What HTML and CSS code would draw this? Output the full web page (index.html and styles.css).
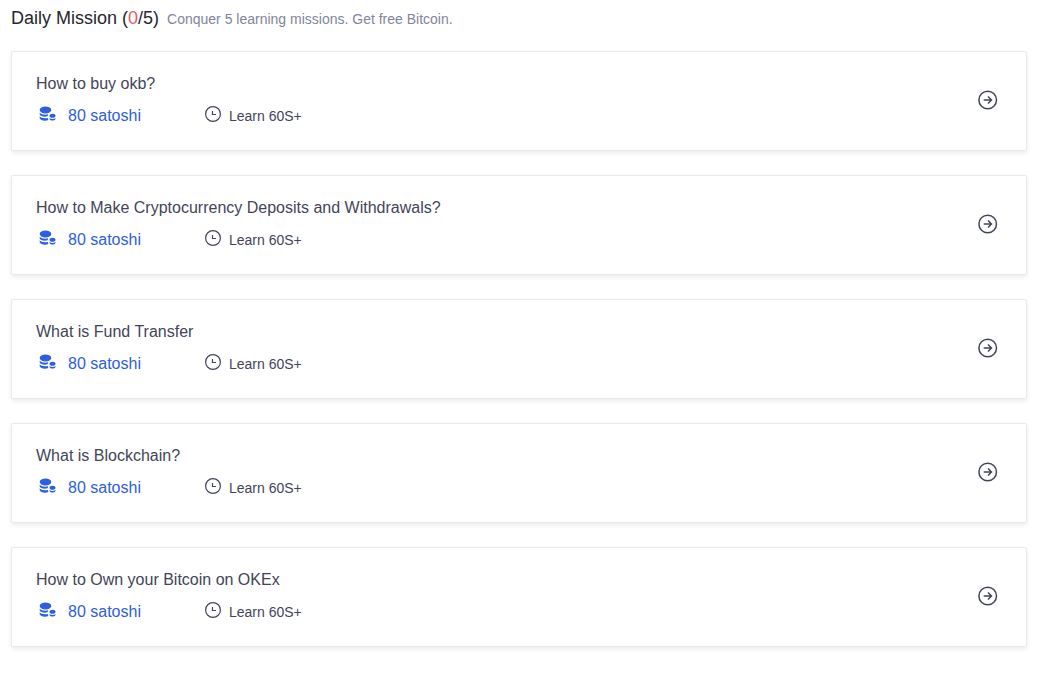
FILE: index.html
```html
<!DOCTYPE html>
<html lang="en">
<head>
    <meta charset="UTF-8">
    <title>Daily Mission</title>
    <link rel="stylesheet" href="styles.css">
</head>
<body>
    <!-- shared icons -->
    <svg class="sprite" aria-hidden="true">
        <symbol id="icon-coins" viewBox="0 0 18 16">
            <ellipse cx="7.500" cy="4" rx="5.800" ry="3.400"/>
            <path d="M1.700 6.800C3.500 8.800 7 9.200 10.200 8.300L9.600 10.300C6.500 11.300 2.500 10.600 1.700 8.600z"/>
            <path d="M1.700 10.300C3.500 12.300 6.500 12.600 9.800 12L10.400 14C7.500 15.400 2.500 14.800 1.700 12.300z"/>
            <ellipse cx="14.500" cy="9.700" rx="3" ry="2"/>
            <path d="M11.500 12C13 13.200 16 13.200 17.500 12V13C16.500 15 12.500 15 11.500 13z"/>
        </symbol>
        <symbol id="icon-clock" viewBox="0 0 16 16">
            <circle cx="8" cy="8" r="7.4"/>
            <path d="M7.500 5V8.500H11"/>
        </symbol>
        <symbol id="icon-arrow" viewBox="0 0 20 20">
            <circle cx="9.700" cy="10" r="8.800"/>
            <path d="M5.700 10H13.400M10 6.500L13.500 10L10 13.500"/>
        </symbol>
    </svg>

    <main class="mission">
        <header class="mission-header">
            <h1 class="mission-title">Daily Mission (<span class="done">0</span>/5)</h1>
            <p class="mission-desc">Conquer 5 learning missions. Get free Bitcoin.</p>
        </header>

        <ul class="mission-list">
            <li>
                <a class="card" href="#">
                    <div class="card-body">
                        <h2 class="card-title">How to buy okb?</h2>
                        <div class="card-meta">
                            <span class="reward"><svg class="coins"><use href="#icon-coins"/></svg>80 satoshi</span>
                            <span class="duration"><svg class="clock"><use href="#icon-clock"/></svg>Learn 60S+</span>
                        </div>
                    </div>
                    <svg class="arrow"><use href="#icon-arrow"/></svg>
                </a>
            </li>
            <li>
                <a class="card" href="#">
                    <div class="card-body">
                        <h2 class="card-title">How to Make Cryptocurrency Deposits and Withdrawals?</h2>
                        <div class="card-meta">
                            <span class="reward"><svg class="coins"><use href="#icon-coins"/></svg>80 satoshi</span>
                            <span class="duration"><svg class="clock"><use href="#icon-clock"/></svg>Learn 60S+</span>
                        </div>
                    </div>
                    <svg class="arrow"><use href="#icon-arrow"/></svg>
                </a>
            </li>
            <li>
                <a class="card" href="#">
                    <div class="card-body">
                        <h2 class="card-title">What is Fund Transfer</h2>
                        <div class="card-meta">
                            <span class="reward"><svg class="coins"><use href="#icon-coins"/></svg>80 satoshi</span>
                            <span class="duration"><svg class="clock"><use href="#icon-clock"/></svg>Learn 60S+</span>
                        </div>
                    </div>
                    <svg class="arrow"><use href="#icon-arrow"/></svg>
                </a>
            </li>
            <li>
                <a class="card" href="#">
                    <div class="card-body">
                        <h2 class="card-title">What is Blockchain?</h2>
                        <div class="card-meta">
                            <span class="reward"><svg class="coins"><use href="#icon-coins"/></svg>80 satoshi</span>
                            <span class="duration"><svg class="clock"><use href="#icon-clock"/></svg>Learn 60S+</span>
                        </div>
                    </div>
                    <svg class="arrow"><use href="#icon-arrow"/></svg>
                </a>
            </li>
            <li>
                <a class="card" href="#">
                    <div class="card-body">
                        <h2 class="card-title">How to Own your Bitcoin on OKEx</h2>
                        <div class="card-meta">
                            <span class="reward"><svg class="coins"><use href="#icon-coins"/></svg>80 satoshi</span>
                            <span class="duration"><svg class="clock"><use href="#icon-clock"/></svg>Learn 60S+</span>
                        </div>
                    </div>
                    <svg class="arrow"><use href="#icon-arrow"/></svg>
                </a>
            </li>
        </ul>
    </main>
</body>
</html>
```
FILE: styles.css
```css
* {
    box-sizing: border-box;
}

body {
    margin: 0;
    font-family: "Liberation Sans", Arial, sans-serif;
    color: #42455a;
    background: #fff;
}

.sprite {
    display: none;
}

.mission {
    padding: 6px 22px 24px 11px;
}

.mission-header {
    display: flex;
    align-items: baseline;
    gap: 8px;
    margin-bottom: 21px;
}

.mission-title {
    margin: 0;
    font-size: 18px;
    font-weight: normal;
    line-height: 24px;
    color: #25262e;
}

.done {
    color: #e35e5e;
}

.mission-desc {
    margin: 0;
    font-size: 14px;
    line-height: 20px;
    color: #81859c;
}

.mission-list {
    display: flex;
    flex-direction: column;
    gap: 24px;
    margin: 0;
    padding: 0;
    list-style: none;
}

.card {
    display: flex;
    align-items: center;
    justify-content: space-between;
    padding: 20px 28px 22px 24px;
    border: 1px solid #e8e9f3;
    border-radius: 2px;
    color: inherit;
    text-decoration: none;
    background: #fff;
    box-shadow: 0 2px 4px rgba(66, 69, 90, 0.1);
}

.card-title {
    margin: 0 0 8px;
    font-size: 16px;
    font-weight: normal;
    line-height: 24px;
}

.card-meta {
    display: flex;
    align-items: baseline;
    line-height: 24px;
}

.reward,
.duration {
    display: flex;
    align-items: center;
}

.reward {
    width: 169px;
    font-size: 16px;
    color: #2d60e0;
}

.duration {
    font-size: 14px;
}

.coins {
    width: 18px;
    height: 16px;
    margin: 0 12px 4px 2px;
    fill: #2d60e0;
}

.clock {
    width: 16px;
    height: 16px;
    margin: 0 8px 4px 0;
    fill: none;
    stroke: #42455a;
    stroke-width: 1.2;
}

.arrow {
    width: 20px;
    height: 20px;
    fill: none;
    stroke: #42455a;
    stroke-width: 1.5;
}
```
